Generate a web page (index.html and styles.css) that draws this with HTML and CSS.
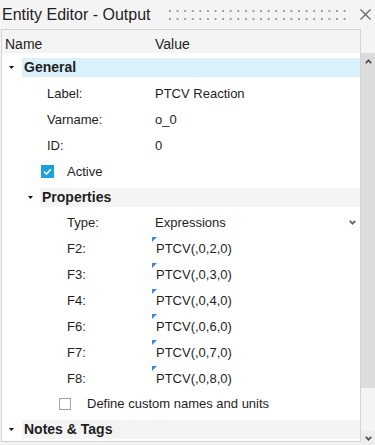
FILE: index.html
```html
<!DOCTYPE html>
<html lang="en">
<head>
    <meta charset="UTF-8">
    <meta name="viewport" content="width=device-width, initial-scale=1.0">
    <title>Entity Editor - Output</title>
    <link rel="stylesheet" href="styles.css">
</head>
<body>

    <!-- Title bar -->
    <div class="titlebar">
        <span class="title">Entity Editor - Output</span>
        <div class="grip"></div>
        <svg class="close" width="11" height="11" viewBox="0 0 11 11">
            <path d="M0.5 0.5 L10.5 10.5 M10.5 0.5 L0.5 10.5" stroke="#666" stroke-width="1.3" fill="none"/>
        </svg>
    </div>

    <div class="panel">
        <div class="head">
            <span class="head-name">Name</span>
            <span class="head-value">Value</span>
        </div>

        <div class="body">
            <div class="list">
                <!-- General -->
                <div class="row section">
                    <svg class="caret" width="5" height="3" viewBox="0 0 5 3"><polygon points="0,0 5,0 2.5,3" fill="#111"/></svg>
                    <div class="band selected">General</div>
                </div>
                <div class="row">
                    <div class="name lv1">Label:</div>
                    <div class="value">PTCV Reaction</div>
                </div>
                <div class="row">
                    <div class="name lv1">Varname:</div>
                    <div class="value">o_0</div>
                </div>
                <div class="row">
                    <div class="name lv1">ID:</div>
                    <div class="value">0</div>
                </div>
                <div class="row check-row">
                    <span class="cb on">
                        <svg width="13" height="13" viewBox="0 0 13 13"><path d="M3.2 6.6 L5.6 9 L9.8 4.2" stroke="#fff" stroke-width="1.6" fill="none"/></svg>
                    </span>
                    <span class="cb-label">Active</span>
                </div>

                <!-- Properties -->
                <div class="row section sub">
                    <svg class="caret" width="5" height="3" viewBox="0 0 5 3"><polygon points="0,0 5,0 2.5,3" fill="#111"/></svg>
                    <div class="band plain">Properties</div>
                </div>
                <div class="row">
                    <div class="name lv2">Type:</div>
                    <div class="value">
                        Expressions
                        <svg class="drop" width="7" height="5" viewBox="0 0 7 5"><path d="M0.8 0.8 L3.5 3.6 L6.2 0.8" stroke="#666" stroke-width="1.8" fill="none"/></svg>
                    </div>
                </div>
                <div class="row">
                    <div class="name lv2">F2:</div>
                    <div class="value expr">PTCV(,0,2,0)</div>
                </div>
                <div class="row">
                    <div class="name lv2">F3:</div>
                    <div class="value expr">PTCV(,0,3,0)</div>
                </div>
                <div class="row">
                    <div class="name lv2">F4:</div>
                    <div class="value expr">PTCV(,0,4,0)</div>
                </div>
                <div class="row">
                    <div class="name lv2">F6:</div>
                    <div class="value expr">PTCV(,0,6,0)</div>
                </div>
                <div class="row">
                    <div class="name lv2">F7:</div>
                    <div class="value expr">PTCV(,0,7,0)</div>
                </div>
                <div class="row">
                    <div class="name lv2">F8:</div>
                    <div class="value expr">PTCV(,0,8,0)</div>
                </div>
                <div class="row check-row define">
                    <span class="cb"></span>
                    <span class="cb-label">Define custom names and units</span>
                </div>

                <!-- Notes & Tags -->
                <div class="row section">
                    <svg class="caret" width="5" height="3" viewBox="0 0 5 3"><polygon points="0,0 5,0 2.5,3" fill="#111"/></svg>
                    <div class="band plain">Notes &amp; Tags</div>
                </div>
            </div>

            <!-- Scrollbar -->
            <div class="scrollbar">
                <div class="sb-up">
                    <svg width="7" height="5" viewBox="0 0 7 5"><path d="M0.8 4.2 L3.5 1.4 L6.2 4.2" stroke="#555" stroke-width="1.8" fill="none"/></svg>
                </div>
                <div class="sb-thumb"></div>
                <div class="sb-track"></div>
                <div class="sb-down">
                    <svg width="7" height="5" viewBox="0 0 7 5"><path d="M0.8 0.8 L3.5 3.6 L6.2 0.8" stroke="#555" stroke-width="1.8" fill="none"/></svg>
                </div>
            </div>
        </div>
    </div>

</body>
</html>
```

FILE: styles.css
```css
/* Base */
body {
    margin: 0;
    width: 375px;
    height: 445px;
    overflow: hidden;
    background-color: #f4f4f4;
    color: #1e1e1e;
    font-family: "Liberation Sans", Arial, sans-serif;
}

/* Title bar */
.titlebar {
    display: flex;
    align-items: flex-start;
    height: 29px;
}

.title {
    font-size: 16px;
    line-height: 29px;
    padding-left: 2px;
    white-space: nowrap;
}

.grip {
    flex: 1;
    height: 10px;
    margin: 10px 9px 0 18px;
    background-image: radial-gradient(circle at 1px 1px, #9c9c9c 1px, transparent 1.3px);
    background-size: 7.6px 8px;
}

.close {
    margin: 9px 4px 0 0;
}

/* Panel */
.panel {
    margin-left: 1px;
}

.head {
    display: flex;
    box-sizing: border-box;
    width: 360px;
    height: 24px;
    padding-top: 6px;
    border: 1px solid #d4d4d4;
    border-bottom: none;
    font-size: 14px;
    line-height: 16px;
}

.head-name {
    width: 153px;
    padding-left: 3px;
    box-sizing: border-box;
}

.body {
    display: flex;
}

.list {
    box-sizing: border-box;
    width: 360px;
    height: 389px;
    padding-top: 2px;
    background-color: #fff;
    border: 1px solid #d4d4d4;
    border-top: none;
}

/* Rows */
.row {
    display: flex;
    align-items: center;
    height: 25.85px;
    font-size: 13px;
    line-height: 15px;
}

.name {
    flex: none;
    width: 153px;
    box-sizing: border-box;
}

.lv1 {
    padding-left: 45px;
}

.lv2 {
    padding-left: 65px;
}

.value {
    flex: 1;
    display: flex;
    align-items: center;
    align-self: stretch;
}

.drop {
    margin-left: auto;
    margin-right: 4px;
}

/* Expression marker */
.expr {
    position: relative;
    padding-left: 1px;
}

.expr::before {
    content: "";
    position: absolute;
    left: -3px;
    top: 1px;
    border-top: 5px solid #3a88e2;
    border-right: 5px solid transparent;
}

/* Section headers */
.section {
    padding-left: 7px;
}

.section.sub {
    padding-left: 26px;
}

.caret {
    flex: none;
}

.band {
    flex: 1;
    height: 19px;
    margin-left: 8px;
    padding-left: 2px;
    font-size: 14px;
    font-weight: bold;
    line-height: 18px;
}

.section.sub .band {
    margin-left: 7px;
}

.band.selected {
    background-color: #d9f1fb;
}

.band.plain {
    background-color: #f4f4f4;
}

/* Checkboxes */
.check-row {
    padding-left: 39px;
}

.cb {
    flex: none;
    box-sizing: border-box;
    width: 12px;
    height: 12px;
    border: 1px solid #a3a3a3;
    background-color: #fff;
}

.cb.on {
    width: 13px;
    height: 13px;
    border: none;
    background-color: #1ba1e2;
}

.cb svg {
    display: block;
}

.cb-label {
    margin-left: 13px;
}

.define {
    padding-left: 57px;
}

.define .cb-label {
    margin-left: 16px;
}

/* Scrollbar */
.scrollbar {
    display: flex;
    flex-direction: column;
    width: 14px;
    height: 392px;
    margin-top: 0;
}

.sb-up,
.sb-down {
    display: flex;
    align-items: center;
    justify-content: center;
}

.sb-up {
    height: 16px;
    background-color: #dcdcdc;
}

.sb-thumb {
    height: 319px;
    background-color: #dcdcdc;
}

.sb-track {
    flex: 1;
    background-color: #f4f4f4;
}

.sb-down {
    height: 14px;
    background-color: #ededed;
}
```
